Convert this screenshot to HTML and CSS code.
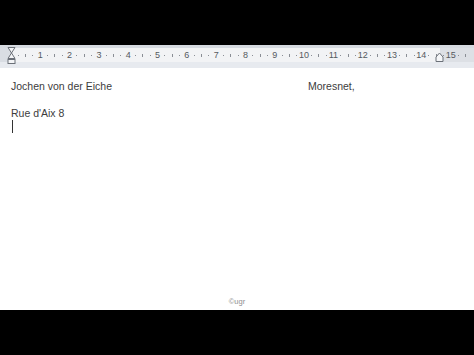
FILE: index.html
```html
<!DOCTYPE html>
<html>
<head>
<meta charset="utf-8">
<link rel="stylesheet" href="styles.css">
</head>
<body>
<div class="topbar"></div>
<div class="ruler">
  <div class="ruler-top"></div>
  <div class="ruler-track">
    <div class="ticks">
      <span class="c"><i class="dot"></i></span><span class="c"><i class="bar"></i></span><span class="c"><i class="dot"></i></span><span class="c n">1</span>
      <span class="c"><i class="dot"></i></span><span class="c"><i class="bar"></i></span><span class="c"><i class="dot"></i></span><span class="c n">2</span>
      <span class="c"><i class="dot"></i></span><span class="c"><i class="bar"></i></span><span class="c"><i class="dot"></i></span><span class="c n">3</span>
      <span class="c"><i class="dot"></i></span><span class="c"><i class="bar"></i></span><span class="c"><i class="dot"></i></span><span class="c n">4</span>
      <span class="c"><i class="dot"></i></span><span class="c"><i class="bar"></i></span><span class="c"><i class="dot"></i></span><span class="c n">5</span>
      <span class="c"><i class="dot"></i></span><span class="c"><i class="bar"></i></span><span class="c"><i class="dot"></i></span><span class="c n">6</span>
      <span class="c"><i class="dot"></i></span><span class="c"><i class="bar"></i></span><span class="c"><i class="dot"></i></span><span class="c n">7</span>
      <span class="c"><i class="dot"></i></span><span class="c"><i class="bar"></i></span><span class="c"><i class="dot"></i></span><span class="c n">8</span>
      <span class="c"><i class="dot"></i></span><span class="c"><i class="bar"></i></span><span class="c"><i class="dot"></i></span><span class="c n">9</span>
      <span class="c"><i class="dot"></i></span><span class="c"><i class="bar"></i></span><span class="c"><i class="dot"></i></span><span class="c n">10</span>
      <span class="c"><i class="dot"></i></span><span class="c"><i class="bar"></i></span><span class="c"><i class="dot"></i></span><span class="c n">11</span>
      <span class="c"><i class="dot"></i></span><span class="c"><i class="bar"></i></span><span class="c"><i class="dot"></i></span><span class="c n">12</span>
      <span class="c"><i class="dot"></i></span><span class="c"><i class="bar"></i></span><span class="c"><i class="dot"></i></span><span class="c n">13</span>
      <span class="c"><i class="dot"></i></span><span class="c"><i class="bar"></i></span><span class="c"><i class="dot"></i></span><span class="c n">14</span>
      <span class="c"><i class="dot"></i></span><span class="c"><i class="bar"></i></span><span class="c"><i class="dot"></i></span><span class="c n">15</span>
      <span class="c"><i class="dot"></i></span><span class="c"><i class="bar"></i></span>
    </div>
  </div>
  <div class="ruler-foot"></div>
  <svg class="indent-left" width="9" height="19" viewBox="0 0 9 19">
    <path d="M1 1.5 H8 L4.5 7 Z" fill="#f4f5f7" stroke="#6b7078" stroke-width="1"/>
    <path d="M4.5 7 L8 12.5 H1 Z" fill="#f4f5f7" stroke="#6b7078" stroke-width="1"/>
    <rect x="1" y="13.5" width="7" height="4" fill="#f4f5f7" stroke="#6b7078" stroke-width="1"/>
  </svg>
  <svg class="indent-right" width="9" height="11" viewBox="0 0 9 11">
    <path d="M4.5 1 L8 5 V9.5 H1 V5 Z" fill="#f4f5f7" stroke="#6b7078" stroke-width="1"/>
  </svg>
</div>
<div class="page">
  <div class="row">
    <span class="left-col">Jochen von der Eiche</span>
    <span>Moresnet,</span>
  </div>
  <div class="row gap">Rue d'Aix 8</div>
  <div class="row cursor-line"><span class="cursor"></span></div>
  <div class="spacer"></div>
  <div class="mark">©ugr</div>
</div>
<div class="bottombar"></div>
</body>
</html>
```
FILE: styles.css
```css
html, body {
  margin: 0;
  padding: 0;
  background: #000;
  width: 474px;
  height: 355px;
  overflow: hidden;
}
.topbar {
  height: 45px;
  background: #000;
}
.ruler {
  position: relative;
  height: 23px;
  background: #fff;
  display: flex;
  flex-direction: column;
}
.ruler-top {
  height: 3px;
  background: #d6dae0;
}
.ruler-track {
  height: 14px;
  background: linear-gradient(to right, #d9dde3 0, #d9dde3 11px, #f2f3f5 11px, #f2f3f5 440px, #dde0e5 440px);
}
.ticks {
  display: flex;
  height: 14px;
  padding-left: 14.67px;
  align-items: center;
}
.c {
  width: 7.333px;
  flex: none;
  height: 14px;
  display: flex;
  align-items: center;
  justify-content: center;
}
.n {
  font-family: "Liberation Sans", Arial, sans-serif;
  font-size: 9px;
  color: #555960;
  line-height: 14px;
}
.dot {
  width: 1px;
  height: 1px;
  background: #8a8e95;
}
.bar {
  width: 1px;
  height: 3px;
  background: #8a8e95;
}
.ruler-foot {
  height: 6px;
  background: #e7eaef;
}
.indent-left {
  position: absolute;
  left: 7px;
  top: 1px;
}
.indent-right {
  position: absolute;
  left: 435px;
  top: 7px;
}
.page {
  height: 242px;
  background: #fff;
  display: flex;
  flex-direction: column;
  padding-left: 11px;
  box-sizing: border-box;
  padding-top: 12px;
  font-family: "Liberation Sans", Arial, sans-serif;
  font-size: 10.5px;
  color: #3c3c3c;
}
.row {
  display: flex;
  line-height: 12px;
  height: 12px;
}
.left-col {
  width: 297px;
}
.gap {
  margin-top: 15px;
}
.cursor-line {
  margin-top: 1px;
  height: 13px;
}
.cursor {
  width: 1px;
  height: 13px;
  background: #333;
  margin-left: 1px;
}
.spacer {
  flex: 1;
}
.mark {
  align-self: center;
  margin-left: -11px;
  font-size: 7.5px;
  color: #8f8f8f;
  line-height: 8px;
  margin-bottom: 4px;
}
.bottombar {
  height: 45px;
  background: #000;
}
```
